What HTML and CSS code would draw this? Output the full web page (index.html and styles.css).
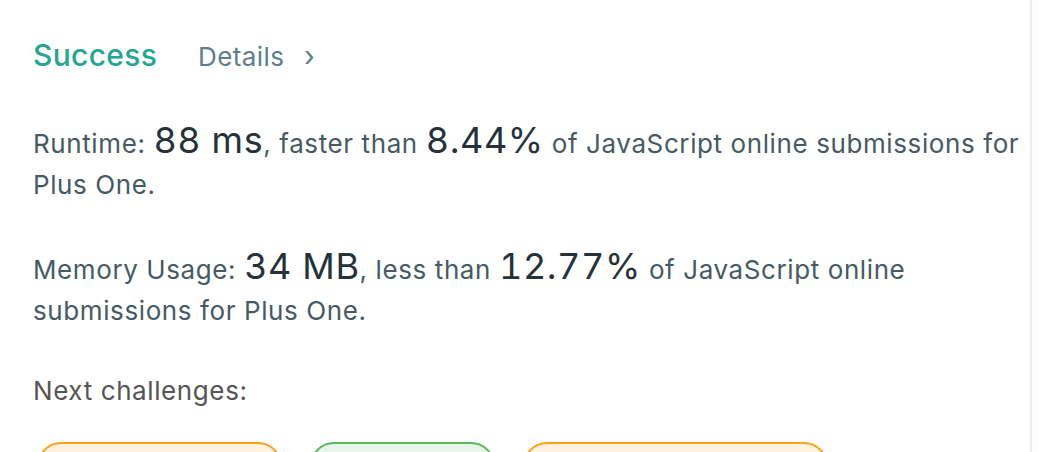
FILE: index.html
```html
<!DOCTYPE html>
<html>
<head>
<meta charset="utf-8">
<link rel="stylesheet" href="styles.css">
</head>
<body>
<div class="page">
  <main class="panel">
    <div class="status-row">
      <span class="status">Success</span>
      <a class="details"><span>Details</span> <span class="chev">›</span></a>
    </div>
    <p class="stat"><span>Runtime:</span> <span class="big">88 ms</span><span>, faster than</span> <span class="big">8.44%</span> <span>of JavaScript online submissions for Plus One.</span></p>
    <p class="stat"><span>Memory Usage:</span> <span class="big">34 MB</span><span>, less than</span> <span class="big">12.77%</span> <span>of JavaScript online submissions for Plus One.</span></p>
    <p class="next">Next challenges:</p>
    <div class="pills">
      <span class="pill medium w1"></span>
      <span class="pill easy w2"></span>
      <span class="pill medium w3"></span>
    </div>
  </main>
  <aside class="side"></aside>
</div>
</body>
</html>
```
FILE: styles.css
```css
html, body {
  margin: 0;
  padding: 0;
  height: 100%;
  overflow: hidden;
  background: #fff;
}
body {
  font-family: Inter, "Noto Sans", sans-serif;
}
.page {
  display: flex;
  height: 452px;
  overflow: hidden;
}
.panel {
  width: 997px;
  padding: 37px 0 0 33px;
  box-sizing: content-box;
}
.side {
  flex: 1;
  border-left: 2px solid #ececec;
  background: #fbfbfb;
}
.status-row {
  display: flex;
  align-items: baseline;
  height: 36px;
  line-height: 36px;
}
.status {
  font-size: 30px;
  color: #27a593;
  font-weight: 500;
  letter-spacing: 0.3px;
}
.details {
  margin-left: 41px;
  font-size: 26px;
  color: #607d8b;
  letter-spacing: 0.4px;
}
.chev {
  margin-left: 12px;
  font-size: 28px;
}
.stat {
  margin: 50px 0 0;
  font-size: 26px;
  line-height: 41px;
  color: #455a64;
  letter-spacing: 0.6px;
  width: 990px;
}
.stat + .stat {
  margin-top: 44px;
}
.big {
  font-size: 36px;
  line-height: 34px;
  color: #263238;
  letter-spacing: 0.6px;
  font-variant-numeric: tabular-nums;
}
.next {
  margin: 39px 0 0;
  font-size: 26px;
  line-height: 41px;
  color: #555;
  letter-spacing: 0.6px;
}
.pills {
  display: flex;
  gap: 28px;
  margin: 31px 0 0 4px;
}
.pill {
  height: 50px;
  border-radius: 24px;
  border: 2px solid;
  box-sizing: border-box;
}
.medium {
  border-color: #ffa11e;
  background: #fff3e0;
}
.easy {
  border-color: #5cb85c;
  background: #e8f5e9;
}
.w1 { width: 245px; }
.w2 { width: 185px; }
.w3 { width: 305px; }
```
